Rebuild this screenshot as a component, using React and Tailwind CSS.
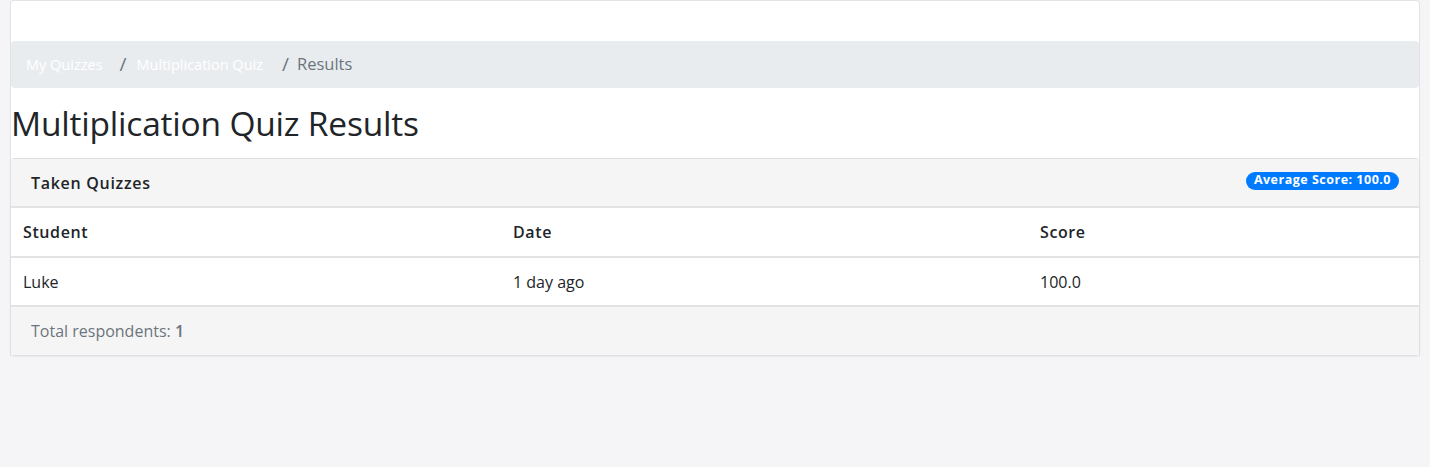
export default function App() {

  const rows = [
    { student: "Luke", date: "1 day ago", score: "100.0" },
  ];

  return (

    <div className="min-h-[467px] bg-[#f5f5f7] px-[10px] text-[#212529]" style={{ fontFamily: "'Open Sans', 'Liberation Sans', sans-serif" }}>

      <div className="bg-white border border-b-0 border-[#e3e3e3] rounded-t-[4px] pt-[40px]">

        {/* BREADCRUMB */}

        <nav className="bg-[#e9ecef] rounded-[4px] h-[47px] flex items-center pl-[15px] text-[14.5px]">
          <a className="text-white">My Quizzes</a>
          <span className="text-[#6c757d] text-[19px] pl-[17px] pr-[10px]">/</span>
          <a className="text-white">Multiplication Quiz</a>
          <span className="text-[#6c757d] text-[19px] pl-[19px] pr-[8px]">/</span>
          <span className="text-[#6c757d] text-[16.5px]">Results</span>
        </nav>

        <h1 className="text-[33.5px] leading-[70px] font-normal tracking-[-0.2px]">
          Multiplication Quiz Results
        </h1>

        {/* CARD */}

        <div className="border border-[#dfdfdf] rounded-[4px] bg-white -mx-px shadow-[0_1px_2px_rgba(0,0,0,0.05)]">

          <div className="bg-[#f5f5f5] h-[49px] flex items-center justify-between px-[20px] border-b-2 border-[#e3e3e3]">
            <h2 className="text-[16px] font-semibold tracking-[0.7px]">Taken Quizzes</h2>
            <span className="bg-[#007bff] text-white text-[12.5px] font-bold rounded-full px-[8px] h-[18px] mb-[4px] flex items-center tracking-[0.5px]">
              Average Score: 100.0
            </span>
          </div>

          <table className="w-full text-left border-collapse">
            <thead>
              <tr className="h-[49px] border-b-2 border-[#e3e3e3]">
                <th className="w-[490px] px-[12px] font-semibold text-[16px] tracking-[0.6px]">Student</th>
                <th className="w-[527px] px-[12px] font-semibold text-[16px] tracking-[0.6px]">Date</th>
                <th className="px-[12px] font-semibold text-[16px] tracking-[0.6px]">Score</th>
              </tr>
            </thead>
            <tbody>
              {rows.map((row, index) => (
                <tr key={index} className="h-[49px] border-b-2 border-[#e3e3e3] text-[16px]">
                  <td className="px-[12px]">{row.student}</td>
                  <td className="px-[12px]">{row.date}</td>
                  <td className="px-[12px]">{row.score}</td>
                </tr>
              ))}
            </tbody>
          </table>

          <div className="bg-[#f5f5f5] h-[48px] flex items-center px-[20px] text-[16px] text-[#6c757d]">
            Total respondents:&nbsp;<span className="font-semibold">1</span>
          </div>

        </div>

      </div>

    </div>
  );
}
